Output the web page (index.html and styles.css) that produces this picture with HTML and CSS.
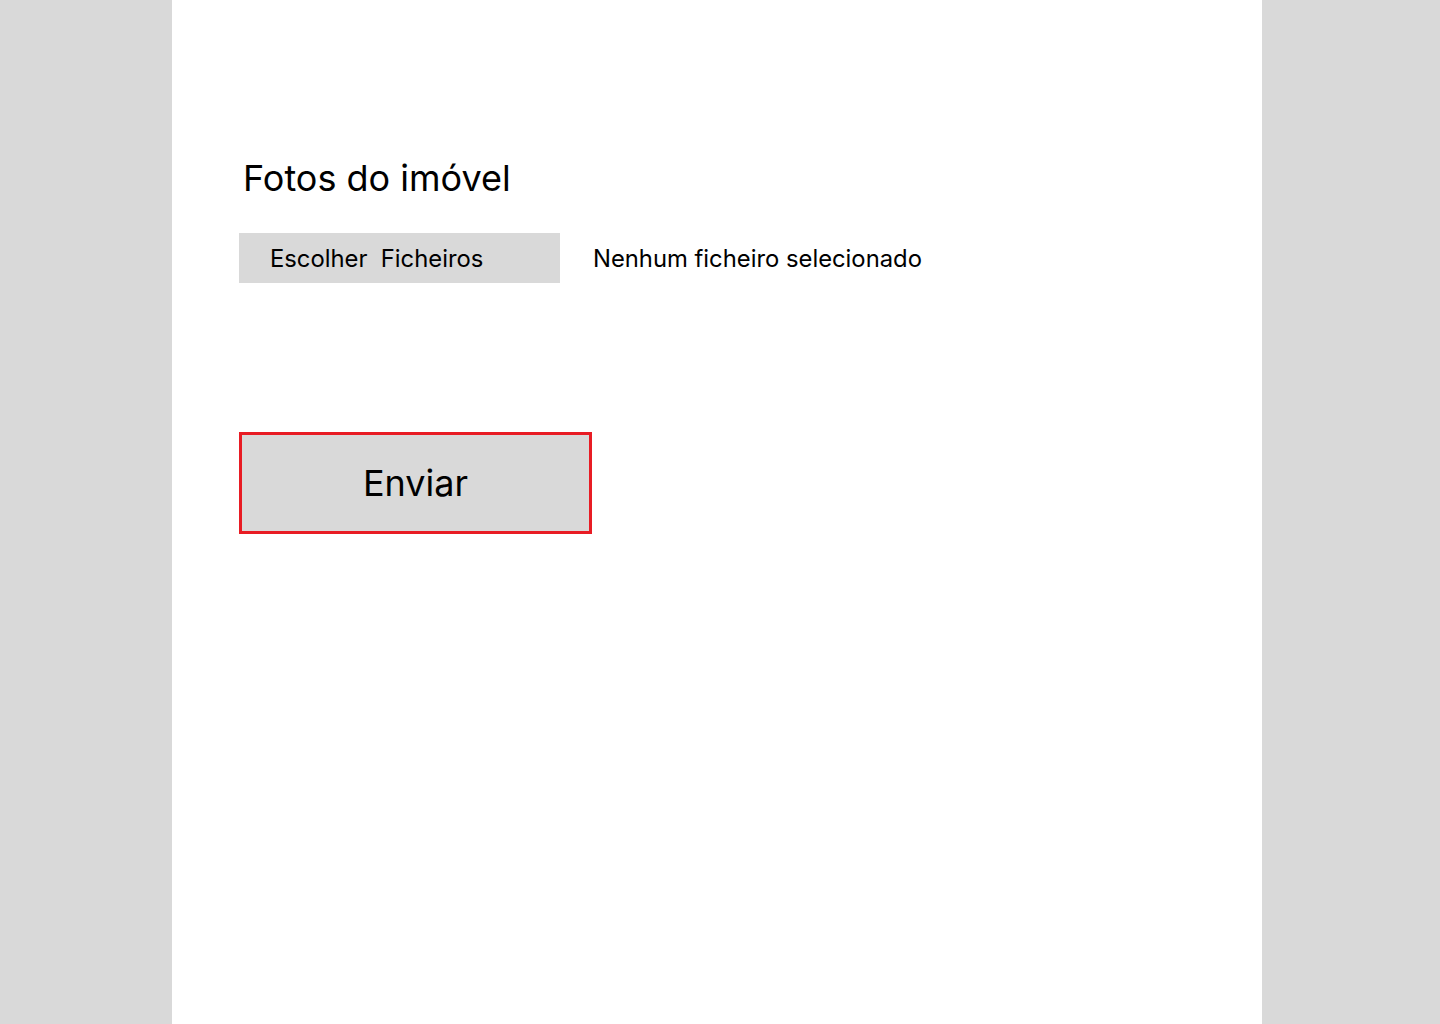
FILE: index.html
```html
<!DOCTYPE html>
<html lang="pt">
<head>
<meta charset="utf-8">
<title>Fotos do imóvel</title>
<link rel="stylesheet" href="styles.css">
</head>
<body>
<main class="panel">
  <h1 class="title">Fotos do imóvel</h1>
  <div class="file-row">
    <div class="file-btn">Escolher&nbsp;&nbsp;Ficheiros</div>
    <span class="file-status">Nenhum ficheiro selecionado</span>
  </div>
  <button class="submit" type="button">Enviar</button>
</main>
</body>
</html>
```

FILE: styles.css
```css
html, body {
  margin: 0;
  padding: 0;
  height: 100%;
}
body {
  background: #d9d9d9;
  font-family: Inter, "Noto Sans", sans-serif;
  color: #000;
  display: flex;
  justify-content: flex-start;
}
.panel {
  margin-left: 172px;
  width: 1090px;
  min-height: 1024px;
  background: #fff;
  box-sizing: border-box;
  padding: 154px 0 0 67px;
  display: flex;
  flex-direction: column;
  align-items: flex-start;
}
.title {
  margin: 0 0 0 4px;
  font-size: 36px;
  font-weight: 400;
  line-height: 48px;
}
.file-row {
  margin-top: 31px;
  display: flex;
  align-items: center;
}
.file-btn {
  width: 321px;
  height: 50px;
  background: #d9d9d9;
  box-sizing: border-box;
  padding-left: 31px;
  display: flex;
  align-items: center;
  font-size: 23.8px;
}
.file-status {
  margin-left: 33px;
  font-size: 23.8px;
}
.submit {
  margin-top: 149px;
  width: 353px;
  height: 102px;
  background: #d9d9d9;
  border: 3px solid #e81c24;
  font-family: Inter, "Noto Sans", sans-serif;
  font-size: 36px;
  color: #000;
  padding: 0;
}
```
